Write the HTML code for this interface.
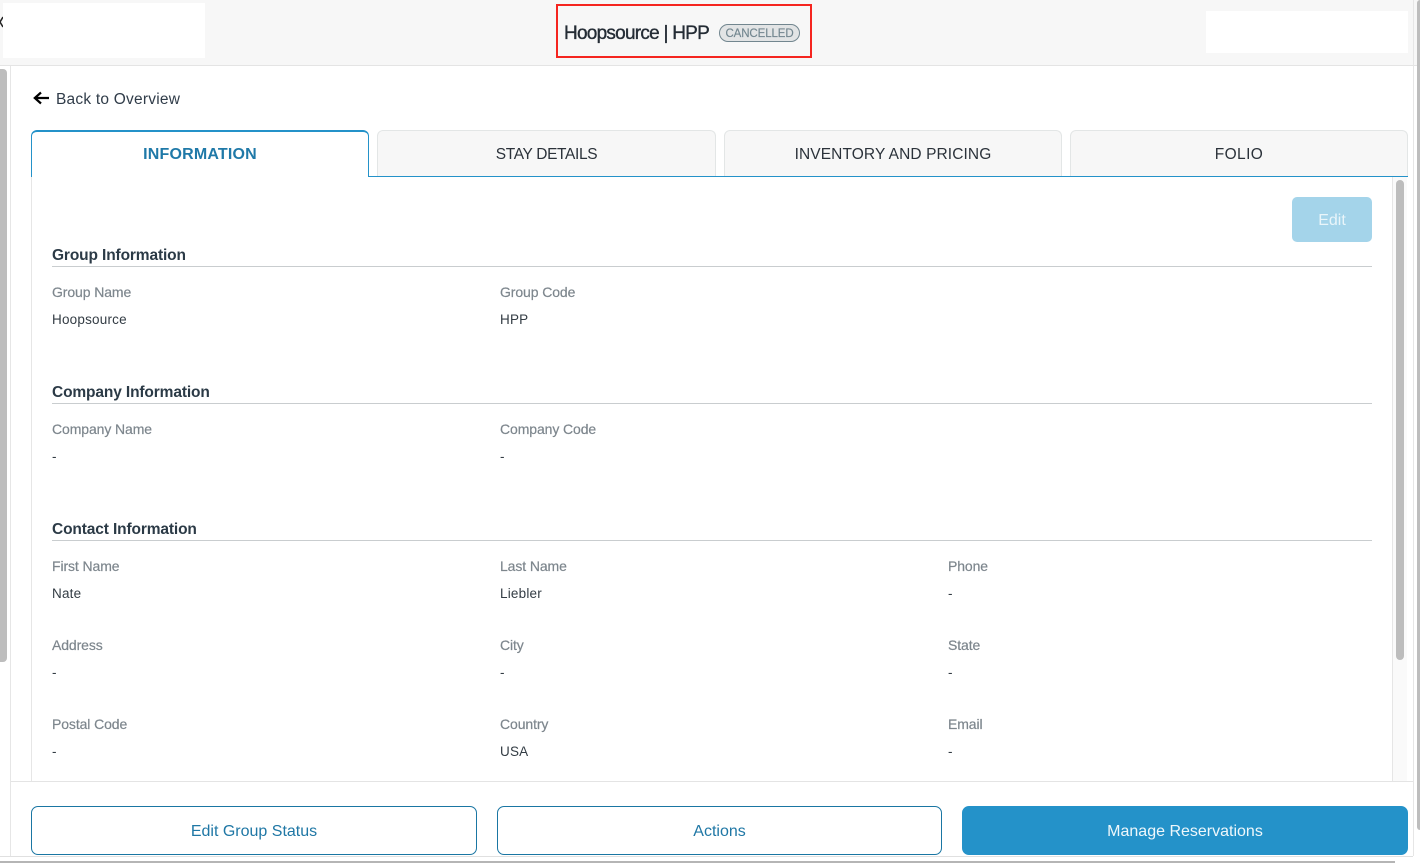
<!DOCTYPE html>
<html><head><meta charset="utf-8"><style>
html,body{margin:0;padding:0;background:#fff}
body{width:1420px;height:863px;position:relative;overflow:hidden;font-family:"Liberation Sans",sans-serif}
div{position:absolute;box-sizing:border-box}
.t{white-space:nowrap;line-height:18px}
.h{font-weight:bold;font-size:15.5px;color:#2b3a46;left:52px;letter-spacing:-.13px}
.l{font-size:14px;color:#7d868d;letter-spacing:-.1px;-webkit-text-stroke:.2px #7d868d}
.v{font-size:13.5px;color:#333c44;letter-spacing:.2px}
.r{left:52px;width:1320px;height:1px;background:#c9cdcf}
.tab{top:130px;height:46px;background:#f7f7f7;border:1px solid #e3e6e6;border-bottom:0;border-radius:6px 6px 0 0;text-align:center;font-size:15.5px;line-height:45px;color:#2b323a}
.btn{top:806px;height:49px;border-radius:7px;text-align:center;font-size:16px;line-height:50px;border:1px solid #1a76a3;color:#1f77a5;background:#fff}
</style></head><body>
<div style="left:0;top:0;width:1420px;height:66px;background:#f7f7f7;border-bottom:1px solid #e4e4e4"></div>
<div style="left:3px;top:3px;width:202px;height:55px;background:#fff"></div>
<div style="left:1206px;top:11px;width:202px;height:42px;background:#fff"></div>
<div style="left:556px;top:4px;width:256px;height:54px;border:2px solid #f5251f"></div>
<div class="t" style="left:564px;top:22px;font-size:19px;line-height:24px;color:#242c35;letter-spacing:-.75px;-webkit-text-stroke:.35px #242c35">Hoopsource | HPP</div>
<div class="t" style="left:719px;top:24px;width:81px;height:18px;border:1px solid #72868f;border-radius:9px;background:#e2e4e5;color:#72868f;font-size:11.5px;line-height:18px;text-align:center;letter-spacing:-.1px;-webkit-text-stroke:.15px #72868f">CANCELLED</div>
<div style="left:0;top:15px;width:3px;height:14px;overflow:hidden"><svg width="3" height="14" style="display:block"><path d="M3 2 L0 7 L3 12" fill="none" stroke="#222" stroke-width="1.5"/></svg></div>

<div style="left:0;top:69px;width:7px;height:593px;background:#bdbdbd;border-radius:0 4px 4px 0"></div>
<div style="left:10px;top:66px;width:1px;height:790px;background:#e6e6e6"></div>
<div style="left:1413px;top:0;width:1px;height:856px;background:#e6e6e6"></div>
<div style="left:1417px;top:0;width:3px;height:830px;background:#bdbdbd;border-radius:3px 0 0 3px"></div>

<svg style="position:absolute;left:33px;top:90px" width="17" height="16" viewBox="0 0 17 16"><path d="M16 8H1.5M8 2.5L1.8 8l6.2 5.5" fill="none" stroke="#000" stroke-width="2.2"/></svg>
<div class="t" style="left:56px;top:91px;font-size:15.5px;color:#303c49;letter-spacing:.22px">Back to Overview</div>

<div class="tab" style="left:377px;width:339px;letter-spacing:-.35px;line-height:47px">STAY DETAILS</div>
<div class="tab" style="left:724px;width:338px;letter-spacing:.1px;line-height:47px">INVENTORY AND PRICING</div>
<div class="tab" style="left:1070px;width:338px;letter-spacing:.4px;line-height:47px">FOLIO</div>
<div style="left:31px;top:176px;width:1377px;height:1px;background:#2492c9"></div>
<div class="tab" style="left:31px;width:338px;height:47px;background:#fff;border:1px solid #2492c9;border-top-width:2px;border-bottom:0;color:#1f79a8;font-weight:bold;font-size:16px;line-height:46px;letter-spacing:.18px">INFORMATION</div>
<div style="left:32px;top:176px;width:336px;height:1px;background:#fff"></div>

<div style="left:31px;top:177px;width:1px;height:604px;background:#e6e6e6"></div>
<div style="left:1392px;top:177px;width:1px;height:604px;background:#e6e6e6"></div>
<div style="left:1393px;top:177px;width:14px;height:604px;background:#fafafa"></div>
<div style="left:1396px;top:180px;width:8px;height:480px;background:#bdbdbd;border-radius:4px"></div>

<div class="t" style="left:1292px;top:197px;width:80px;height:45px;background:#a4d4ea;border-radius:5px;color:#e9f5fa;font-size:16px;line-height:48px;text-align:center">Edit</div>

<div class="t h" style="top:247px">Group Information</div><div class="r" style="top:266px"></div>
<div class="t l" style="left:52px;top:283px">Group Name</div><div class="t l" style="left:500px;top:283px">Group Code</div>
<div class="t v" style="left:52px;top:311px">Hoopsource</div><div class="t v" style="left:500px;top:311px">HPP</div>

<div class="t h" style="top:384px">Company Information</div><div class="r" style="top:403px"></div>
<div class="t l" style="left:52px;top:420px">Company Name</div><div class="t l" style="left:500px;top:420px">Company Code</div>
<div class="t v" style="left:52px;top:448px">-</div><div class="t v" style="left:500px;top:448px">-</div>

<div class="t h" style="top:521px">Contact Information</div><div class="r" style="top:540px"></div>
<div class="t l" style="left:52px;top:557px">First Name</div><div class="t l" style="left:500px;top:557px">Last Name</div><div class="t l" style="left:948px;top:557px">Phone</div>
<div class="t v" style="left:52px;top:585px">Nate</div><div class="t v" style="left:500px;top:585px">Liebler</div><div class="t v" style="left:948px;top:585px">-</div>
<div class="t l" style="left:52px;top:636px">Address</div><div class="t l" style="left:500px;top:636px">City</div><div class="t l" style="left:948px;top:636px">State</div>
<div class="t v" style="left:52px;top:664px">-</div><div class="t v" style="left:500px;top:664px">-</div><div class="t v" style="left:948px;top:664px">-</div>
<div class="t l" style="left:52px;top:715px">Postal Code</div><div class="t l" style="left:500px;top:715px">Country</div><div class="t l" style="left:948px;top:715px">Email</div>
<div class="t v" style="left:52px;top:743px">-</div><div class="t v" style="left:500px;top:743px">USA</div><div class="t v" style="left:948px;top:743px">-</div>

<div style="left:11px;top:781px;width:1402px;height:75px;background:#fff;border-top:1px solid #e4e4e4"></div>
<div class="btn" style="left:31px;width:446px">Edit Group Status</div>
<div class="btn" style="left:497px;width:445px">Actions</div>
<div class="btn" style="left:962px;width:446px;background:#2492c9;border-color:#2492c9;color:#eef7fb">Manage Reservations</div>
<div style="left:0;top:856px;width:1413px;height:1px;background:#e0e0e0"></div>
<div style="left:0;top:857px;width:1420px;height:6px;background:#fff"></div>
<div style="left:0;top:861px;width:1395px;height:2px;background:#b5b5b5"></div>
</body></html>
